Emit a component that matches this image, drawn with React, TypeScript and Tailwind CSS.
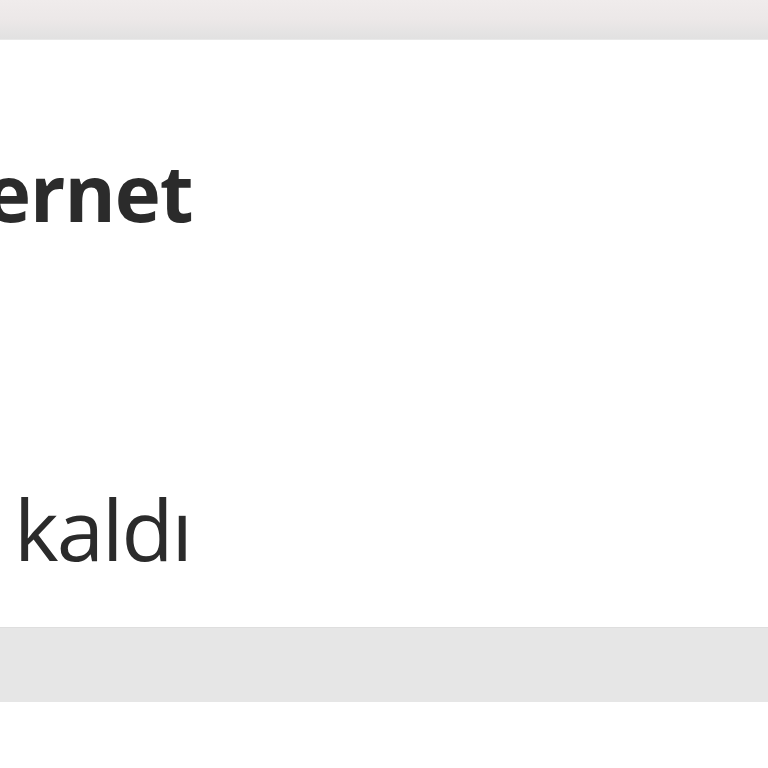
import React from "react";

export default function App() {
  return (
    <div className="w-[768px] h-[768px] overflow-hidden bg-white" style={{ fontFamily: '"Open Sans", "Noto Sans", sans-serif' }}>
      <div className="h-[40px] bg-gradient-to-b from-[#f0ecec] via-[#ece8e8] to-[#e1e1e1] border-b border-[#e9e9e9]" />
      <div className="h-[587px] bg-white overflow-hidden flex flex-col text-[#2b2b2b]">
        <div className="ml-[-123px] mt-[102px] text-[78px] leading-[100px] font-bold tracking-[-1px] whitespace-nowrap">İnternet</div>
        <div className="ml-[-232px] mt-[236px] text-[85px] leading-[100px] font-normal tracking-[-2px] whitespace-nowrap">10 GB kaldı</div>
      </div>
      <div className="h-[75px] bg-[#e6e6e6] border-t border-[#dedede]" />
      <div className="flex-1 bg-white" />
    </div>
  );
}
